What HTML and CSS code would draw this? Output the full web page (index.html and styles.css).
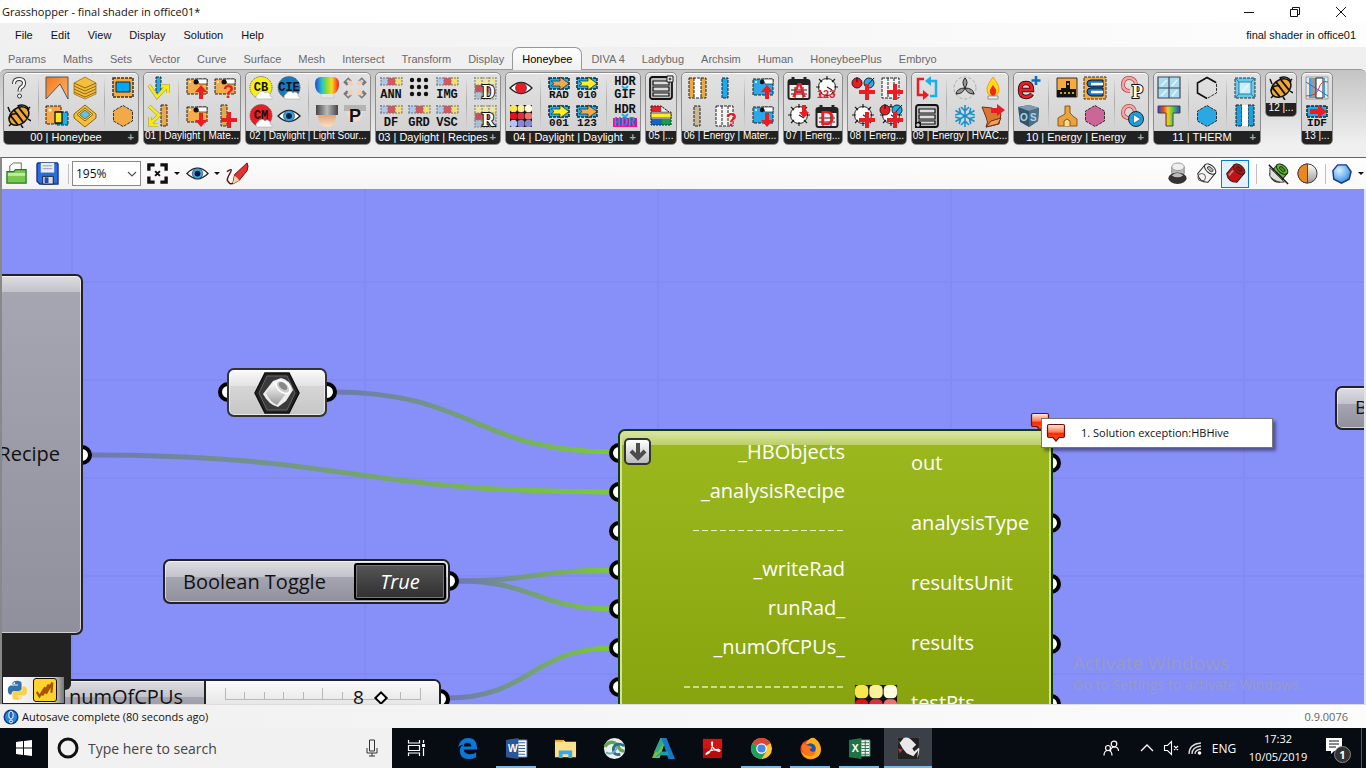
FILE: index.html
```html
<!DOCTYPE html>
<html lang="en">
<head>
<meta charset="utf-8">
<title>Grasshopper - final shader in office01*</title>
<link rel="stylesheet" href="styles.css">
</head>
<body>
<svg class="defs" aria-hidden="true">
  <defs>
    <linearGradient id="steel" x1="0" y1="0" x2="0" y2="1"><stop offset="0" stop-color="#fff"/><stop offset="1" stop-color="#999"/></linearGradient>
    <linearGradient id="dark" x1="0" y1="0" x2="1" y2="0"><stop offset="0" stop-color="#444"/><stop offset=".5" stop-color="#bbb"/><stop offset="1" stop-color="#444"/></linearGradient>
    <linearGradient id="orange" x1="0" y1="0" x2="1" y2="1"><stop offset="0" stop-color="#f2761c"/><stop offset="1" stop-color="#fbb96d"/></linearGradient>
    <linearGradient id="rainbow"><stop offset="0" stop-color="#2446d8"/><stop offset=".3" stop-color="#28c8c0"/><stop offset=".5" stop-color="#8fdc30"/><stop offset=".7" stop-color="#ffd820"/><stop offset="1" stop-color="#e82020"/></linearGradient>
    <linearGradient id="rainbow2"><stop offset="0" stop-color="#2446d8"/><stop offset=".25" stop-color="#e85020"/><stop offset=".45" stop-color="#ffc820"/><stop offset=".65" stop-color="#58d040"/><stop offset="1" stop-color="#2446d8"/></linearGradient>
    <linearGradient id="redball" x1="0" y1="0" x2="0" y2="1"><stop offset="0" stop-color="#fff0e4"/><stop offset=".45" stop-color="#ff7a50"/><stop offset=".55" stop-color="#f42c08"/><stop offset="1" stop-color="#ff5a20"/></linearGradient>
    <linearGradient id="wire" gradientUnits="objectBoundingBox"><stop offset="0" stop-color="#6e78b4"/><stop offset="1" stop-color="#7bcb35"/></linearGradient>
    <linearGradient id="bulb" x1="0" y1="0" x2="0" y2="1"><stop offset="0" stop-color="#e0a070"/><stop offset="1" stop-color="#fbe0c4"/></linearGradient>
    <radialGradient id="blueball" cx=".35" cy=".3" r=".8"><stop offset="0" stop-color="#d8f0ff"/><stop offset=".6" stop-color="#6ab0f0"/><stop offset="1" stop-color="#2f6cc8"/></radialGradient>
    <symbol id="strip" viewBox="0 0 24 24"><path fill="#a9c9ea" d="M2 2h7v7H2z"/><path fill="#e5505c" d="M9 2h7v7H9z"/><path fill="#f0de72" d="M16 2h7v7h-7z"/><path d="M1 2h22M1 9h22M2 1v9M9 1v9M16 1v9M23 1v9" fill="none" stroke="#777" stroke-width="1" stroke-dasharray="2 1"/></symbol>
    <symbol id="folder" viewBox="0 0 24 24"><path d="M2 3h20v15H2z" fill="#f4ad4a" stroke="#222" stroke-dasharray="3 1"/><path d="M12 3h10v5h-8z" fill="#fff" stroke="#222" stroke-width=".7"/><circle cx="11" cy="6" r="2.500" fill="#111"/><circle cx="5" cy="6" r="1" fill="#fff"/></symbol>
    <symbol id="bfolder" viewBox="0 0 24 24"><path d="M2 3h20v16H2z" fill="#29a9ea" stroke="#222" stroke-dasharray="3 1"/><path d="M12 3h10v5h-8z" fill="#fff" stroke="#222" stroke-width=".7"/><circle cx="11" cy="6" r="2.200" fill="#111"/><circle cx="5" cy="6" r="1" fill="#fff"/></symbol>
    <symbol id="up" viewBox="0 0 24 24"><path d="m16 9 6 7h-4v7h-4v-7h-4z" fill="#ec1c24"/></symbol>
    <symbol id="down" viewBox="0 0 24 24"><path d="m16 23 6-7h-4V9h-4v7h-4z" fill="#ec1c24"/></symbol>
    <symbol id="plus" viewBox="0 0 24 24"><path d="M14 8h4v6h6v4h-6v6h-4v-6H8v-4h6z" fill="#ec1c24"/></symbol>
    <symbol id="clock" viewBox="0 0 24 24"><circle cx="12" cy="11" r="8.500" fill="#fff" stroke="#222"/><path d="M12 0v4M12 18v4M1 11h4M19 11h4M4 3l3 3M20 3l-3 3M4 19l3-3M20 19l-3-3M12 11l5 3" stroke="#222" stroke-width="1.200"/></symbol>
    <symbol id="cal" viewBox="0 0 24 24"><rect x="1.500" y="4" width="21" height="19" rx="2" fill="#eee" stroke="#222" stroke-width="2"/><path d="M1 4h22v5H1z" fill="#222"/><path d="M6 1v6M18 1v6" stroke="#222" stroke-width="3"/><path d="M4 14h16M4 18h16M8 11v11M16 11v11" stroke="#222"/></symbol>
    <symbol id="arrowbox" viewBox="0 0 24 24"><path d="M2 2h20v11H2z" fill="#20aeea" stroke="#222" stroke-width="1.500" stroke-dasharray="3 1"/><path d="M4 5h9V1l9 6.500-9 6.500v-4H4l3-2.500z" fill="currentColor" stroke="#222" stroke-width=".7"/></symbol>
    <symbol id="hex" viewBox="0 0 24 24"><path d="m12 1.500 9.500 5.500v10L12 22.500 2.500 17V7z" fill="currentColor" stroke="#333" stroke-dasharray="3 1"/></symbol>
    <symbol id="bee" viewBox="0 0 24 24"><path d="M3 8 1 3M12 4l-1-3M20 6l3-3M21 15l3 2M14 21l2 3M5 19l-3 3" stroke="#111" stroke-width="1.500"/><ellipse cx="12" cy="12" rx="11" ry="8" transform="rotate(-40 12 12)" fill="#f0a830" stroke="#111" stroke-width="1.500"/><path d="m7 6 9 12M12 4l8 10M3 11l8 10" stroke="#111" stroke-width="2"/><path d="M2 15c1-5 5-6 9-5M11 2c4-2 9-1 11 4" fill="none" stroke="#111" stroke-width="1.500"/></symbol>
    <symbol id="eye" viewBox="0 0 24 24"><path d="M1 12Q12 1 23 12 12 23 1 12z" fill="#fff" stroke="#222" stroke-width="1.300"/><circle cx="12" cy="12" r="5.500" fill="currentColor" stroke="#234" stroke-width=".6"/></symbol>
    <symbol id="cloud" viewBox="0 0 24 24"><path d="M8 23a3 3 0 0 1 1-5 4 4 0 0 1 7-1 3 3 0 0 1 5 3q3 0 2 3z" fill="#fff" stroke="#999" stroke-width=".5"/></symbol>
    <symbol id="tiles" viewBox="0 0 24 24"><path fill="#ece6a0" d="M2 2h21v7H2z"/><path fill="#c8505c" d="M2 9h14v7H2z"/><path fill="#a9c0dc" d="M2 16h14v7H2z"/><path d="M1 2h22M1 9h22M1 16h22M1 23h22M2 1v22M9 1v22M16 1v22M23 1v22" stroke="#888" stroke-width="1.200" stroke-dasharray="2 1"/></symbol>
    <symbol id="mosaic" viewBox="0 0 24 24"><path fill="#111" d="M1 1h22v22H1z"/><g stroke="none"><g fill="#f9e64e"><rect x="1" y="1" width="7" height="7" rx="2.500"/><rect x="8.500" y="1" width="7" height="7" rx="2.500" fill="#fbf09a"/><rect x="16" y="1" width="7" height="7" rx="2.500" fill="#fffce0"/></g><g fill="#e0101c"><rect x="1" y="8.500" width="7" height="7" rx="2.500"/><rect x="8.500" y="8.500" width="7" height="7" rx="2.500" fill="#d83040"/><rect x="16" y="8.500" width="7" height="7" rx="2.500" fill="#f07070"/></g><g fill="#8888d0"><rect x="1" y="16" width="7" height="7" rx="2.500" fill="#b8c4f0"/><rect x="8.500" y="16" width="7" height="7" rx="2.500"/><rect x="16" y="16" width="7" height="7" rx="2.500"/></g></g></symbol>
    <symbol id="panel" viewBox="0 0 24 24"><rect x="1" y="1" width="22" height="22" rx="2.500" fill="#bbb" stroke="#111" stroke-width="1.800"/><path d="M4 5h16v4H4zM4 11h16v4H4zM4 17h16v3H4z" fill="#ddd" stroke="#111" stroke-width="1.200"/></symbol>
    <symbol id="can" viewBox="0 0 24 24"><g transform="rotate(40 12 12)"><path d="M5 6v12q7 6 14 0V6z" fill="currentColor" stroke="#222"/><ellipse cx="12" cy="6" rx="7" ry="4" fill="currentColor" stroke="#222"/><ellipse cx="12" cy="6" rx="3.500" ry="1.800" fill="#000" fill-opacity=".25" stroke="#222" stroke-width=".8"/><path d="M8 11v7" stroke="#fff" stroke-opacity=".4" stroke-width="2"/></g></symbol>
    <symbol id="balloon" viewBox="0 0 20 20"><path d="M3 1.500h14q1.500 0 1.500 1.500v10q0 1.500-1.500 1.500h-4L10 18l-3-3.500H3q-1.500 0-1.500-1.500V3q0-1.500 1.500-1.500z" fill="url(#redball)" stroke="#6a1010" stroke-width="1.200"/></symbol>
  </defs>
</svg>

<header class="titlebar">
  <h1>Grasshopper - final shader in office01*</h1>
  <div class="winbtns">
    <button aria-label="Minimize"><svg viewBox="0 0 12 12"><path d="M1 6.500h10"/></svg></button>
    <button aria-label="Restore"><svg viewBox="0 0 12 12"><path d="M1.500 3.500h7v7h-7zM3.500 3.500v-2h7v7h-2"/></svg></button>
    <button aria-label="Close"><svg viewBox="0 0 12 12"><path d="m1 1 10 10M11 1 1 11"/></svg></button>
  </div>
</header>

<nav class="menubar">
  <button>File</button><button>Edit</button><button>View</button><button>Display</button><button>Solution</button><button>Help</button>
  <span class="docname">final shader in office01</span>
</nav>

<nav class="tabs">
  <button>Params</button><button>Maths</button><button>Sets</button><button>Vector</button><button>Curve</button><button>Surface</button><button>Mesh</button><button>Intersect</button><button>Transform</button><button>Display</button><button class="active">Honeybee</button><button>DIVA 4</button><button>Ladybug</button><button>Archsim</button><button>Human</button><button>HoneybeePlus</button><button>Embryo</button>
</nav>

<section class="ribbon">
  <div class="group">
    <div class="cells">
      <div class="sub">
        <button aria-label="Help"><svg viewBox="0 0 24 24"><path d="M7 8q0-5 5-5t5 4q0 3-3 4.500-1.500 1-1.500 4" fill="none" stroke="#333" stroke-width="4"/><path d="M7 8q0-5 5-5t5 4q0 3-3 4.500-1.500 1-1.500 4" fill="none" stroke="#fff" stroke-width="2"/><circle cx="12.500" cy="20" r="2" fill="#fff" stroke="#333"/></svg></button>
        <button aria-label="Bee"><svg viewBox="0 0 24 24"><use href="#bee"/></svg></button>
      </div>
      <div class="sub">
        <button aria-label="Zone"><svg viewBox="0 0 24 24"><path d="M1 1h22v22L15 8 1 23z" fill="url(#orange)" stroke="#555"/></svg></button>
        <button aria-label="Glazing"><svg viewBox="0 0 24 24"><path d="M1 2h15v18H1z" fill="#f8a848" stroke="#222" stroke-dasharray="3 1"/><circle cx="5" cy="6" r="1.500" fill="#fff"/><path d="M12 8h11v13H12z" fill="#20aeea" stroke="#222" stroke-dasharray="3 1"/><path d="M10 8h7v11h-7z" fill="#ffe820" stroke="#111" stroke-width="1.300"/></svg></button>
        <button aria-label="Floors"><svg viewBox="0 0 24 24"><path d="M1 7l11-6 11 6v11l-11 5L1 18z" fill="#f5be3c" stroke="#8a6410" stroke-width=".7"/><path d="m1 7 11 5 11-5M1 10l11 5 11-5M1 13l11 5 11-5M1 16l11 5 11-5" fill="none" stroke="#8a6410"/></svg></button>
        <button aria-label="Skylight"><svg viewBox="0 0 24 24"><path d="m12 1 11 9v4l-11 9L1 14v-4z" fill="#f5be3c" stroke="#8a6410"/><path d="m12 4 8 6.500-8 6.500-8-6.500z" fill="#fbd66c" stroke="#8a6410"/><path d="m12 6 5.500 4.500L12 15l-5.500-4.500z" fill="#5cc4e4" stroke="#8a6410"/></svg></button>
      </div>
      <div class="sub">
        <button aria-label="Surface"><svg viewBox="0 0 24 24"><path d="M2 2h20v19H2z" fill="#f5ab40" stroke="#333" stroke-width="1.500" stroke-dasharray="3 1"/><path d="M5 6h14v10H5z" fill="#00a8f0" stroke="#222"/></svg></button>
        <button aria-label="Cell"><svg viewBox="0 0 24 24" class="c-amber"><use href="#hex"/></svg></button>
      </div>
    </div>
    <div class="label more">00 | Honeybee</div>
  </div>

  <div class="group">
    <div class="cells">
      <div class="sub">
        <button aria-label="Transmit"><svg viewBox="0 0 24 24"><path d="M9 1h5v16H9z" fill="#20aeea" stroke="#222" stroke-dasharray="3 1"/><path d="m2 9 8 12 10-11M14 10h7v7" fill="none" stroke="#888" stroke-width="3.600"/><path d="m2 9 8 12 10-11M14 10h7v7" fill="none" stroke="#f6ea10" stroke-width="2.800"/></svg></button>
        <button aria-label="Reflect"><svg viewBox="0 0 24 24"><path d="M14 1h6v21h-6z" fill="#e8a850" stroke="#222" stroke-dasharray="3 1"/><path d="m2 2 10 9-9 9M3 13v8h8" fill="none" stroke="#888" stroke-width="3.600"/><path d="m2 2 10 9-9 9M3 13v8h8" fill="none" stroke="#f6ea10" stroke-width="2.800"/></svg></button>
      </div>
      <div class="sub">
        <button aria-label="Write material"><svg viewBox="0 0 24 24"><use href="#folder"/><use href="#up"/></svg></button>
        <button aria-label="Read material"><svg viewBox="0 0 24 24"><use href="#folder"/><use href="#down"/></svg></button>
        <button aria-label="Search material"><svg viewBox="0 0 24 24"><use href="#folder"/><text x="10" y="22" class="t-red t18">?</text></svg></button>
        <button aria-label="Add material"><svg viewBox="0 0 24 24"><path d="M8 1h6v21H8z" fill="#e8a850" stroke="#333" stroke-dasharray="3 1"/><use href="#plus"/></svg></button>
      </div>
    </div>
    <div class="label cut">01 | Daylight | Mate...</div>
  </div>

  <div class="group">
    <div class="cells">
      <div class="sub">
        <button aria-label="CB sky"><svg viewBox="0 0 24 24"><circle cx="12" cy="11.500" r="11" fill="#f8f010" stroke="#555" stroke-dasharray="1 1"/><text x="12" y="15" class="t-mono">CB</text><use href="#cloud"/></svg></button>
        <button aria-label="CM sky"><svg viewBox="0 0 24 24"><circle cx="12" cy="11.500" r="11" fill="#ec1c24" stroke="#555" stroke-dasharray="1 1"/><text x="12" y="15" class="t-mono">CM</text><use href="#cloud"/></svg></button>
        <button aria-label="CIE sky"><svg viewBox="0 0 24 24"><circle cx="12" cy="11.500" r="11" fill="#1878c0" stroke="#555" stroke-dasharray="1 1"/><text x="12" y="15" class="t-mono">CIE</text><use href="#cloud"/></svg></button>
        <button aria-label="View sky"><svg viewBox="0 0 24 24" class="c-sky"><use href="#eye"/><circle cx="12" cy="12" r="3" fill="#024"/></svg></button>
      </div>
      <div class="sub">
        <button aria-label="Light colour"><svg viewBox="0 0 24 24"><path d="M6 15h13v7H6z" fill="#e4e4e4" stroke="#ccc"/><path d="M0 8q0-7 6-7h12q6 0 6 7 0 8-6 10H6Q0 16 0 8z" fill="url(#rainbow)"/></svg></button>
        <button aria-label="Lamp"><svg viewBox="0 0 24 24"><path d="M3 10h18q0 13-9 13T3 10z" fill="url(#bulb)"/><path d="M1 1h22v10H1z" fill="url(#dark)"/></svg></button>
        <button aria-label="Luminaires"><svg viewBox="0 0 24 24"><g stroke-width="5"><path d="m2 8 5-5M17 3l5 5M2 16l5 5M17 21l5-5" stroke="#777"/><path d="m6 9 3-3M15 6l3 3M6 15l3 3M15 18l3-3" stroke="#f6d0b0"/><path d="m4 6 2-2M18 4l2 2M4 18l2 2M18 20l2-2" stroke="#ddd" stroke-width="2"/></g></svg></button>
        <button aria-label="Lamp parameters"><svg viewBox="0 0 24 24"><path d="M1 1h22v6H1z" fill="#b4b4b4"/><path d="M4 7h16q-1 10-8 11T4 7z" fill="#eedccb"/><text x="6" y="18" class="t-black t18">P</text></svg></button>
      </div>
    </div>
    <div class="label cut">02 | Daylight | Light Sour...</div>
  </div>

  <div class="group">
    <div class="cells">
      <div class="sub">
        <button aria-label="Annual"><svg viewBox="0 0 24 24"><use href="#strip"/><text x="12" y="22" class="t-mono">ANN</text></svg></button>
        <button aria-label="Daylight factor"><svg viewBox="0 0 24 24"><use href="#strip"/><text x="12" y="22" class="t-mono">DF</text></svg></button>
        <button aria-label="Test points"><svg viewBox="0 0 24 24"><g fill="#111"><circle cx="5" cy="4" r="2.200"/><circle cx="12" cy="4" r="2.200"/><circle cx="19" cy="4" r="2.200"/><circle cx="5" cy="11" r="2.200"/><circle cx="12" cy="11" r="2.200"/><circle cx="19" cy="11" r="2.200"/><circle cx="5" cy="18" r="2.200"/><circle cx="12" cy="18" r="2.200"/><circle cx="19" cy="18" r="2.200"/></g></svg></button>
        <button aria-label="Grid based"><svg viewBox="0 0 24 24"><use href="#strip"/><text x="12" y="22" class="t-mono">GRD</text></svg></button>
        <button aria-label="Image based"><svg viewBox="0 0 24 24"><use href="#strip"/><text x="12" y="22" class="t-mono">IMG</text></svg></button>
        <button aria-label="Vertical sky"><svg viewBox="0 0 24 24"><use href="#strip"/><text x="12" y="22" class="t-mono">VSC</text></svg></button>
      </div>
      <div class="sub">
        <button aria-label="Daylight grid"><svg viewBox="0 0 24 24"><use href="#tiles"/><text x="9" y="22" class="t-out">D</text></svg></button>
        <button aria-label="Radiation grid"><svg viewBox="0 0 24 24"><use href="#tiles"/><text x="9" y="22" class="t-out">R</text></svg></button>
      </div>
    </div>
    <div class="label more">03 | Daylight | Recipes</div>
  </div>

  <div class="group">
    <div class="cells">
      <div class="sub">
        <button aria-label="Glare"><svg viewBox="0 0 24 24" class="c-red"><use href="#eye"/></svg></button>
        <button aria-label="Run daylight"><svg viewBox="0 0 24 24"><use href="#mosaic"/></svg></button>
      </div>
      <div class="sub">
        <button aria-label="RAD"><svg viewBox="0 0 24 24" class="c-amber"><use href="#arrowbox"/><text x="12" y="22" class="t-mono t10">RAD</text></svg></button>
        <button aria-label="001"><svg viewBox="0 0 24 24" class="c-yellow"><use href="#arrowbox"/><text x="12" y="22" class="t-mono t10">001</text></svg></button>
        <button aria-label="010"><svg viewBox="0 0 24 24" class="c-yellow"><use href="#arrowbox"/><text x="12" y="22" class="t-mono t10">010</text></svg></button>
        <button aria-label="123"><svg viewBox="0 0 24 24" class="c-amber"><use href="#arrowbox"/><text x="12" y="22" class="t-mono t10">123</text></svg></button>
      </div>
      <div class="sub">
        <button aria-label="HDR to GIF"><svg viewBox="0 0 24 24"><text x="12" y="9" class="t-mono">HDR</text><path d="m9 10 3 3 3-3" fill="none" stroke="#20aeea" stroke-width="2"/><text x="12" y="22" class="t-mono">GIF</text></svg></button>
        <button aria-label="HDR false colour"><svg viewBox="0 0 24 24"><text x="12" y="9" class="t-mono">HDR</text><path d="m9 10 3 3 3-3" fill="none" stroke="#20aeea" stroke-width="2"/><path d="M0 14h24v9H0z" fill="#f01090"/><text x="12" y="22" class="t-mono t-blue">HDR</text></svg></button>
      </div>
    </div>
    <div class="label more">04 | Daylight | Daylight</div>
  </div>

  <div class="group">
    <div class="cells"><div class="sub">
      <button aria-label="List"><svg viewBox="0 0 24 24"><use href="#panel"/><path d="M18 0h6v6h-6z" fill="#fff" stroke="#111"/><path d="M19.500 3h3M21 1.500v3" stroke="#111"/></svg></button>
      <button aria-label="Schemes"><svg viewBox="0 0 24 24"><path d="M2 2h10v6H2z" fill="#ec1c24"/><path d="m12 2 8 6h-8z" fill="#d8f0f8" stroke="#555" stroke-width=".5"/><path d="M2 15h11v6H2z" fill="#1464c8"/><path d="M13 15h9v6h-9z" fill="#10a050"/><path d="M2 2h10l8 6h2v13H2z" fill="none" stroke="#222" stroke-dasharray="2 1"/><path d="M2 9h20v5H2z" fill="#ffee20" stroke="#222" stroke-width=".7"/></svg></button>
    </div></div>
    <div class="label cut">05 |...</div>
  </div>

  <div class="group">
    <div class="cells">
      <div class="sub">
        <button aria-label="Construction"><svg viewBox="0 0 24 24"><path d="M4 2h5v20H4zM16 2h5v20h-5z" fill="#f0a840"/><path d="M9 2h7v20H9z" fill="#fff"/><path d="M4 2h17v20H4zM9 2v20M16 2v20" fill="none" stroke="#222" stroke-dasharray="3 1"/></svg></button>
        <button aria-label="Opaque"><svg viewBox="0 0 24 24"><path d="M9 2h6v20H9z" fill="#c9b896" stroke="#222" stroke-dasharray="3 1"/></svg></button>
        <button aria-label="Glass"><svg viewBox="0 0 24 24"><path d="M9 2h6v20H9z" fill="#20a8ea" stroke="#222" stroke-dasharray="3 1"/></svg></button>
        <button aria-label="Find construction"><svg viewBox="0 0 24 24"><path d="M3 2h17v20H3zM9 2v20M15 2v20" fill="#f4f4f4" stroke="#222" stroke-dasharray="3 1"/><text x="13" y="22" class="t-red t18">?</text></svg></button>
      </div>
      <div class="sub">
        <button aria-label="Write library"><svg viewBox="0 0 24 24"><use href="#bfolder"/><use href="#up"/></svg></button>
        <button aria-label="Read library"><svg viewBox="0 0 24 24"><use href="#bfolder"/><use href="#down"/></svg></button>
      </div>
    </div>
    <div class="label cut">06 | Energy | Mater...</div>
  </div>

  <div class="group">
    <div class="cells"><div class="sub">
      <button aria-label="Annual schedule"><svg viewBox="0 0 24 24"><use href="#cal"/><text x="5" y="21" class="t-red t20">A</text></svg></button>
      <button aria-label="Read schedule"><svg viewBox="0 0 24 24"><use href="#clock"/><path d="m17 14 5-6h-3V1h-4v7h-3z" fill="#ec1c24"/></svg></button>
      <button aria-label="Hour values"><svg viewBox="0 0 24 24"><use href="#clock"/><text x="2" y="22" class="t-red t11">123</text></svg></button>
      <button aria-label="Day schedule"><svg viewBox="0 0 24 24"><use href="#cal"/><text x="5" y="21" class="t-red t20">D</text></svg></button>
    </div></div>
    <div class="label cut">07 | Energ...</div>
  </div>

  <div class="group">
    <div class="cells"><div class="sub">
      <button aria-label="Add loads"><svg viewBox="0 0 24 24"><circle cx="6" cy="7" r="5" fill="#ec1c24" stroke="#222"/><circle cx="18" cy="7" r="5" fill="#20aeea" stroke="#222"/><path d="M6 1v5M15 11l8-9" stroke="#111"/><use href="#plus"/></svg></button>
      <button aria-label="Add schedule"><svg viewBox="0 0 24 24"><use href="#clock"/><use href="#plus"/></svg></button>
      <button aria-label="Add walls"><svg viewBox="0 0 24 24"><path d="M3 2h17v20H3zM9 2v20M15 2v20" fill="#f4f4f4" stroke="#222" stroke-dasharray="3 1"/><use href="#plus"/></svg></button>
      <button aria-label="Add thresholds"><svg viewBox="0 0 24 24"><use href="#clock"/><circle cx="6" cy="6" r="5" fill="#ec1c24" stroke="#222"/><circle cx="18" cy="6" r="5" fill="#20aeea" stroke="#222"/><path d="M6 0v5M15 10l8-9" stroke="#111"/><use href="#plus"/></svg></button>
    </div></div>
    <div class="label cut">08 | Energ...</div>
  </div>

  <div class="group">
    <div class="cells">
      <div class="sub">
        <button aria-label="Air loop"><svg viewBox="0 0 24 24"><path d="M9 3H3v16h7" fill="none" stroke="#ec1c24" stroke-width="2.500"/><path d="m8 14 6 5-6 5z" fill="#ec1c24"/><path d="M15 20h6V5h-6" fill="none" stroke="#20aeea" stroke-width="2.500"/><path d="m16 0-6 5 6 5z" fill="#20aeea"/></svg></button>
        <button aria-label="HVAC list"><svg viewBox="0 0 24 24"><use href="#panel"/><path d="M0 18h6v6H0z" fill="#111"/><path d="M1 21h4M3 19v4" stroke="#fff"/></svg></button>
      </div>
      <div class="sub">
        <button aria-label="Fan"><svg viewBox="0 0 24 24"><circle cx="12" cy="12" r="11" fill="none" stroke="#aaa" stroke-dasharray="3 2"/><path d="M12 12q-4-6 0-10 4 4 0 10zM12 12q-2 6-9 6 1-6 9-6zM12 12q2 6 9 6-1-6-9-6z" fill="#999" stroke="#222"/></svg></button>
        <button aria-label="Cooling"><svg viewBox="0 0 24 24"><g fill="none" stroke="#1890d0" stroke-width="1.600"><path id="arm" d="M12 1v22M8 3l4 4 4-4M8 21l4-4 4 4"/><use href="#arm" transform="rotate(60 12 12)"/><use href="#arm" transform="rotate(120 12 12)"/></g></svg></button>
        <button aria-label="Heating"><svg viewBox="0 0 24 24"><path d="M12 1q6 8 6 12 0 7-6 7t-6-7q0-4 6-12z" fill="#ffd91c" stroke="#f0a010"/><path d="M12 9q4 5 3 8-1 3-3 3t-3-3q-1-3 3-8z" fill="#ec2c14"/><path d="M7 20h10v3H7z" fill="#eee" stroke="#777" stroke-width=".7"/></svg></button>
        <button aria-label="Export HVAC"><svg viewBox="0 0 24 24"><path d="m1 3 10 1 9 6-2 10-13 3q3-5 0-10z" fill="#d87830" stroke="#703010"/><path d="m5 23 5-6 10-3-3 6z" fill="#f0a060" stroke="#703010"/><path d="M10 4h6V0l8 6-8 6V9h-6z" fill="#ec1c24"/></svg></button>
      </div>
    </div>
    <div class="label cut">09 | Energy | HVAC...</div>
  </div>

  <div class="group">
    <div class="cells">
      <div class="sub">
        <button aria-label="EnergyPlus"><svg viewBox="0 0 24 24"><path d="M3 14h12q0-7-6-7T3 14q0 7 6 7 4 0 6-3" fill="none" stroke="#111" stroke-width="4.400"/><path d="M3 14h12q0-7-6-7T3 14q0 7 6 7 4 0 6-3" fill="none" stroke="#ec1c24" stroke-width="2.800"/><path d="M19 0v9M14.500 4.500h9" stroke="#1070c0" stroke-width="2.600"/></svg></button>
        <button aria-label="OpenStudio"><svg viewBox="0 0 24 24"><path d="m1 3 11-2 10 3-1 13-9 6-9-5z" fill="#34546c"/><path d="m1 3 11 4 10-3-10-3z" fill="#7c9cb0"/><path d="M12 7v16l9-6 1-13z" fill="#4c7088"/><text x="3" y="17" class="t-os">O</text><text x="13" y="17" class="t-os">S</text></svg></button>
      </div>
      <div class="sub">
        <button aria-label="Plant"><svg viewBox="0 0 24 24"><path d="M2 2h20v19H2z" fill="#f5ab40" stroke="#333"/><path d="M2 14h4v-2h5V5h4v8h6v8H2z" fill="#111"/><path d="M5 17h2M9 17h2M13 17h2M17 17h2M12 8h2" stroke="#fd0" stroke-width="1.500"/></svg></button>
        <button aria-label="Generator"><svg viewBox="0 0 24 24"><path d="M10 2h5v7l4 4 3 2v7H3v-8l7-4z" fill="#e8a440" stroke="#8a5a10"/><path d="M9 22v-5l3-2 3 2v5" fill="#fcd890" stroke="#8a5a10"/></svg></button>
        <button aria-label="Read results"><svg viewBox="0 0 24 24"><path d="M1 1h22v22H1z" fill="#f5ab40" stroke="#333" stroke-dasharray="3 1"/><path d="M20 4H8q-4 0-4 3.500T8 11h12V4zM20 12H8q-4 0-4 3.500T8 20h12z" fill="#1878c8" stroke="#111"/><path d="M8 8h12M8 16h12" stroke="#fff" stroke-width="2.500"/></svg></button>
        <button aria-label="Balance"><svg viewBox="0 0 24 24" class="c-pink"><use href="#hex"/></svg></button>
      </div>
      <div class="sub">
        <button aria-label="Simulation parameters"><svg viewBox="0 0 24 24"><path d="M15 8q-1-6-7-6t-6 7q0 6 7 6" fill="none" stroke="#b44" stroke-width="4"/><path d="M15 8q-1-6-7-6t-6 7q0 6 7 6" fill="none" stroke="#eaa" stroke-width="2.500"/><text x="11" y="22" class="t-out">P</text></svg></button>
        <button aria-label="Run simulation"><svg viewBox="0 0 24 24"><path d="M14 8q-1-6-6-6T2 8q0 6 6 6" fill="none" stroke="#b44" stroke-width="4"/><path d="M14 8q-1-6-6-6T2 8q0 6 6 6" fill="none" stroke="#eaa" stroke-width="2.500"/><circle cx="15" cy="15" r="7.500" fill="#18a0e0" stroke="#222"/><path d="m12.500 10.500 7 4.500-7 4.500z" fill="#fff" stroke="#222" stroke-width=".5"/></svg></button>
      </div>
    </div>
    <div class="label more">10 | Energy | Energy</div>
  </div>

  <div class="group">
    <div class="cells">
      <div class="sub">
        <button aria-label="Window"><svg viewBox="0 0 24 24"><path d="M1 1h22v21H1zM12 1v21M1 12h22" fill="#a8dcf0" stroke="#445" stroke-width="1.200"/><path d="m4 10 6-6M15 10l5-6M4 20l6-6M15 20l5-6" stroke="#e4f6fc" stroke-width="1.500"/></svg></button>
        <button aria-label="THERM"><svg viewBox="0 0 24 24"><path d="M1 2h22v7h-7v13H9V9H1z" fill="url(#rainbow2)" stroke="#444"/></svg></button>
      </div>
      <div class="sub">
        <button aria-label="Boundary"><svg viewBox="0 0 24 24"><path d="m12 1.500 9.500 5.500v10L12 22.500 2.500 17V7z" fill="none" stroke="#333" stroke-dasharray="3 1"/><path d="M12 22.500 2.500 17V7L12 1.500l9 5" fill="none" stroke="#111" stroke-width="1.600"/></svg></button>
        <button aria-label="Polygon"><svg viewBox="0 0 24 24" class="c-blue"><use href="#hex"/></svg></button>
      </div>
      <div class="sub">
        <button aria-label="Frame"><svg viewBox="0 0 24 24"><path d="M2 2h20v20H2z" fill="#68c8ec" stroke="#333" stroke-dasharray="3 1"/><path d="M6 6h12v12H6z" fill="#cceefa" stroke="#2880a8"/><path d="m2 2 4 4M22 2l-4 4M2 22l4-4M22 22l-4-4" stroke="#2880a8"/><path d="m9 16 7-8" stroke="#fff"/></svg></button>
        <button aria-label="Cavity"><svg viewBox="0 0 24 24"><path d="M3 1h6v21H3zM15 1h6v21h-6z" fill="#18a0e0" stroke="#222" stroke-dasharray="3 1"/><path d="M9 1h6v21H9z" fill="#fff"/></svg></button>
      </div>
    </div>
    <div class="label more">11 | THERM</div>
  </div>

  <div class="group short">
    <div class="cells"><div class="sub one">
      <button aria-label="Developers"><svg viewBox="0 0 24 24"><use href="#bee"/></svg></button>
    </div></div>
    <div class="label cut">12 |...</div>
  </div>

  <div class="group">
    <div class="cells"><div class="sub">
      <button aria-label="Chart"><svg viewBox="0 0 24 24"><path d="M1 1h22v22H1z" fill="#e8e8e8" stroke="#999"/><path d="M6 2h5v20H6z" fill="#999"/><path d="M11 2h7v20h-7z" fill="#fff" stroke="#222"/><path d="M5 2v20M19 2v20" stroke="#30a8e0" stroke-width="2"/><path d="M1 20Q12 20 14 12T23 6" fill="none" stroke="#e03030"/><path d="m1 6 22 14" stroke="#55c"/></svg></button>
      <button aria-label="IDF export"><svg viewBox="0 0 24 24"><path d="M2 2h20v11H2z" fill="#20aeea" stroke="#222" stroke-width="1.500" stroke-dasharray="3 1"/><path d="M5 5h8V1l9 6.500-9 6.500v-4H5z" fill="#ec1c24"/><text x="12" y="22" class="t-mono t10">IDF</text></svg></button>
    </div></div>
    <div class="label cut">13 |...</div>
  </div>
</section>

<section class="toolbar">
  <button class="ib" aria-label="Open"><svg viewBox="0 0 24 24"><path d="M5 10V4l4-3h8v12" fill="#fff" stroke="#666"/><path d="M2 10h7l2-2h11v14H2z" fill="#7cc850" stroke="#1c7a1c" stroke-width="1.300"/><path d="M3 13h18" stroke="#c0eca0" stroke-width="3"/></svg></button>
  <button class="ib" aria-label="Save"><svg viewBox="0 0 24 24"><path d="M2 1h20l1 1v21H4l-3-3V2z" fill="#2c6ce0" stroke="#0c2c80" stroke-width="1.300"/><path d="M5 1h14v10H5z" fill="#e8eef8"/><path d="M7 4h10M7 7h10" stroke="#999"/><path d="M7 15h11v8H7z" fill="#ddd" stroke="#123"/><path d="M9 16h4v6H9z" fill="#1c4cb0"/></svg></button>
  <span class="sep"></span>
  <label class="zoom"><select aria-label="Zoom"><option>195%</option><option>100%</option></select><svg viewBox="0 0 10 10"><path d="m1 3 4 4 4-4" fill="none" stroke="#555" stroke-width="1.200"/></svg></label>
  <button class="ib" aria-label="Zoom extents"><svg viewBox="0 0 24 24"><path d="M3 9V3h6M15 3h6v6M21 15v6h-6M9 21H3v-6" fill="none" stroke="#111" stroke-width="3.500"/><path d="m9.500 9.500 5 5M14.500 9.500l-5 5" stroke="#111" stroke-width="2"/></svg></button><button class="caret" aria-label="Zoom options"></button>
  <button class="ib" aria-label="Views"><svg viewBox="0 0 24 24" class="c-sky"><use href="#eye"/><circle cx="12" cy="12" r="3" fill="#013"/></svg></button><button class="caret" aria-label="View options"></button>
  <button class="ib" aria-label="Sketch"><svg viewBox="0 0 24 24"><path d="m9 13 13-12q2 3 0 8L14 19l-7 4z" fill="#e03434" stroke="#6a0c0c"/><path d="m9 14 5 5-7 4z" fill="#f4d4a0"/><path d="M1 10q7-5 3 2T2 20q2 4 5 2" fill="none" stroke="#511" stroke-width="1.500"/></svg></button>
  <span class="grow"></span>
  <button class="ib" aria-label="No preview"><svg viewBox="0 0 24 24"><path d="M6 5v7q6 6 13 0V5z" fill="#bbb" stroke="#888"/><ellipse cx="12.500" cy="5" rx="6.500" ry="4" fill="#eee" stroke="#999"/><ellipse cx="12" cy="17" rx="9.500" ry="6" fill="#333"/><path d="M6 14q6-5 12 0-6 4-12 0z" fill="#bbb"/></svg></button>
  <button class="ib" aria-label="Wireframe"><svg viewBox="0 0 24 24" class="c-white"><use href="#can"/><circle cx="7" cy="16" r="4" fill="none" stroke="#555"/></svg></button>
  <button class="ib on" aria-label="Shaded"><svg viewBox="0 0 24 24" class="c-crimson"><use href="#can"/></svg></button>
  <span class="sep"></span>
  <button class="ib" aria-label="Selected only"><svg viewBox="0 0 24 24" class="c-green"><use href="#can"/><path d="m3 6 15 15q-8 1-15-6z" fill="#ddd" stroke="#444"/><path d="m2 3 20 20" stroke="#111" stroke-width="1.500"/></svg></button>
  <button class="ib" aria-label="Document preview"><svg viewBox="0 0 24 24"><circle cx="12" cy="12" r="10" fill="url(#steel)" stroke="#333"/><path d="M12 2a10 10 0 0 0 0 20z" fill="#e88820" stroke="#633"/></svg></button>
  <span class="sep tight"></span>
  <button class="ib" aria-label="Mesh quality"><svg viewBox="0 0 24 24"><path d="m8 3 9 0 5 7-2 8-8 4-8-4-1-9z" fill="url(#blueball)" stroke="#14388a" stroke-width="1.500"/></svg></button><button class="caret" aria-label="Quality options"></button>
</section>

<main class="canvas">
  <svg class="wires" aria-hidden="true">
    <g transform="translate(0 -189)" fill="none" stroke="url(#wire)" stroke-width="5">
      <path d="M332 392C474 392 474 452 614 452"/>
      <path d="M88 455C350 455 350 492 614 492"/>
      <path d="M457 581C535 581 535 570 614 570"/>
      <path d="M457 581C535 581 535 609 614 609"/>
      <path d="M447 698C531 698 531 648 614 648"/>
      <g fill="#fff" stroke="#000" stroke-width="4">
        <circle cx="228" cy="392" r="8"/><circle cx="327" cy="392" r="8"/>
        <circle cx="82" cy="455" r="8"/><circle cx="449" cy="581" r="8"/><circle cx="440" cy="699" r="8"/>
        <circle cx="619" cy="453" r="8"/><circle cx="619" cy="492" r="8"/><circle cx="619" cy="531" r="8"/><circle cx="619" cy="570" r="8"/><circle cx="619" cy="609" r="8"/><circle cx="619" cy="648" r="8"/><circle cx="619" cy="687" r="8"/>
        <circle cx="1051" cy="463" r="8"/><circle cx="1051" cy="523" r="8"/><circle cx="1051" cy="584" r="8"/><circle cx="1051" cy="644" r="8"/><circle cx="1051" cy="704" r="8"/>
      </g>
    </g>
  </svg>

  <div class="node slider">
    <label class="name" for="cpus">numOfCPUs</label>
    <div class="track">
      <svg class="ticks" viewBox="0 0 196 12" aria-hidden="true"><path d="M.5 0v11M19.500 4v7M39.500 4v7M58.500 4v7M78.500 4v7M97.500 0v11M117.500 4v7M175.500 4v7M195.500 0v11M0 11.500h196" stroke="#b8b8b8" fill="none"/></svg>
      <output for="cpus">8</output>
      <input id="cpus" type="range" min="0" max="10" value="8">
    </div>
  </div>

  <div class="shade"></div>
  <div class="node recipe">Recipe</div>

  <div class="node geometry">
    <svg viewBox="0 0 46 42"><path d="M11 1h24l10 20-10 20H11L1 21z" fill="#222" stroke="#111" stroke-width="1.500"/><path d="M13 4h20l8 17-8 17H13L5 21z" fill="#3a3a3a" stroke="#666"/><path d="m9 22 10-13 8-3q8 1 12 12l-7 11-8 6q-9-2-15-13z" fill="#eee"/><path d="m12 21 9-11q7 3 10 13l-8 10q-7-3-11-12z" fill="url(#steel)"/><ellipse cx="29" cy="15" rx="8" ry="5" transform="rotate(40 29 15)" fill="#ccc" stroke="#fff" stroke-width="1.500"/><ellipse cx="29" cy="14" rx="5" ry="3" transform="rotate(40 29 14)" fill="#888"/></svg>
  </div>

  <div class="node toggle"><span>Boolean Toggle</span><button>True</button></div>

  <div class="node offside"><span>Boolean Toggle</span></div>

  <section class="node daylight">
    <button class="expand" aria-label="Collapse"><svg viewBox="0 0 20 20"><path d="M10 1v15M3 9l7 7 7-7" fill="none" stroke="#4c4c4c" stroke-width="4"/></svg></button>
    <ul class="inputs">
      <li>_HBObjects</li><li>_analysisRecipe</li><li class="rule"><i></i></li><li>_writeRad</li><li>runRad_</li><li>_numOfCPUs_</li><li class="rule long"><i></i></li>
    </ul>
    <svg class="logo" viewBox="0 0 24 24"><use href="#mosaic"/></svg>
    <ul class="outputs">
      <li>out</li><li>analysisType</li><li>resultsUnit</li><li>results</li><li>testPts</li>
    </ul>
  </section>

  <svg class="alert" viewBox="0 0 20 20"><use href="#balloon"/></svg>
  <div class="tooltip" role="tooltip"><svg viewBox="0 0 20 20"><use href="#balloon"/></svg><span>1. Solution exception:HBHive</span></div>

  <div class="widget">
    <button aria-label="Python"><svg viewBox="0 0 24 24"><path d="M12 2q5 0 5 3v6q0 2-3 2H9q-3 0-3 4H4q-2-1-2-5t3-5h8V6H7V4q1-2 5-2z" fill="#3272a8"/><path d="M12 23q-5 0-5-3v-4q0-3 3-3h6q2 0 2-4v-1h2q3 1 3 5t-3 5h-8v1h5v2q-1 2-5 2z" fill="#fcd044"/><circle cx="9" cy="4.500" r="1" fill="#fff"/><circle cx="15" cy="20.500" r="1" fill="#fff"/></svg></button>
    <button class="scribble" aria-label="Markup"><svg viewBox="0 0 24 24"><path d="m3 14 3 5 6-10-3 9 7-12-3 10 7-12-1 11" fill="none" stroke="#a85400" stroke-width="2.400"/></svg></button>
  </div>

  <div class="watermark"><strong>Activate Windows</strong><span>Go to Settings to activate Windows.</span></div>
</main>

<footer class="status">
  <svg viewBox="0 0 16 16"><circle cx="8" cy="8" r="7.500" fill="#083c8c"/><circle cx="8" cy="8" r="6" fill="#2888d8"/><ellipse cx="8" cy="6" rx="2.200" ry="4" fill="#2060c0" stroke="#fff"/><circle cx="8" cy="12.500" r="1.500" fill="#2060c0" stroke="#fff"/></svg>
  <span>Autosave complete (80 seconds ago)</span>
  <span class="version">0.9.0076</span>
</footer>

<div class="taskbar">
  <button class="start" aria-label="Start"><svg viewBox="0 0 16 16"><path d="m0 2 7-1v6.500H0zM8 1l8-1v7.500H8zM0 8.500h7V15l-7-1zM8 8.500h8V16l-8-1z" fill="#fff"/></svg></button>
  <label class="search"><svg viewBox="0 0 22 22"><circle cx="11" cy="11" r="9" fill="none" stroke="#111" stroke-width="3"/></svg><input type="text" placeholder="Type here to search" aria-label="Search"><svg class="mic" viewBox="0 0 12 18"><path d="M3.500 1h5v11h-5zM1 9v5h10V9M6 14v3M3 17h6" fill="none" stroke="#333"/></svg></label>
  <button class="view" aria-label="Task view"><svg viewBox="0 0 18 16"><path d="M1.500 0v3h11V0M1.500 16v-3h11v3M1.500 5.500h11v5h-11zM16.500 0v3M16.500 8v8" fill="none" stroke="#fff" stroke-width="1.200"/><path d="M15 4h3v3h-3z" fill="#fff"/></svg></button>
  <div class="apps">
    <button aria-label="Edge"><svg viewBox="0 0 24 24"><path d="M2 11Q4 1 13 1t9 12H8q1 5 7 5 4 0 6-2v5q-3 2-8 2-9 0-9-9 0-4 4-6-4 0-6 3zm6-1h8q0-4-4-4t-4 4z" fill="#0a78d8"/></svg></button>
    <button class="run" aria-label="Word"><svg viewBox="0 0 24 24"><path d="M12 3h11v18H12z" fill="#fff" stroke="#2b579a"/><path d="M14 6h7M14 9h7M14 12h7M14 15h7M14 18h7" stroke="#2b579a"/><path d="m1 3 13-2v22L1 21z" fill="#2b579a"/><text x="3" y="16" class="t-app">W</text></svg></button>
    <button aria-label="Explorer"><svg viewBox="0 0 24 24"><path d="M1 3h9l2 2h11v16H1z" fill="#fde08a"/><path d="M1 3h9v2H1z" fill="#e8a820"/><path d="M5 22v-8h14v8h-4v-4H9v4z" fill="#38a8e8"/></svg></button>
    <button aria-label="Modeling"><svg viewBox="0 0 24 24"><circle cx="12" cy="12" r="11" fill="#e8f0f0"/><path d="M2 10Q8 2 15 8q3 8 7 6" fill="none" stroke="#62a848" stroke-width="3.500"/><path d="M22 9q-8-4-11 2-1 9 7 7" fill="none" stroke="#28708c" stroke-width="3"/><path d="M3 16q8 4 12-6" fill="none" stroke="#7ab" stroke-width="2"/></svg></button>
    <button aria-label="Autodesk"><svg viewBox="0 0 24 24"><path d="m9 1 6 0-7 21H0z" fill="#74c044"/><path d="m9 1 6 0-9 15-4 0z" fill="#2aa890"/><path d="M10 1h5l9 22h-7z" fill="#1878c8"/><path d="m2 22 8-7h6l2 4H8z" fill="#18a0a8"/></svg></button>
    <button aria-label="Acrobat"><svg viewBox="0 0 24 24"><path d="M2 2h20v20H2z" fill="#b80c0c"/><path d="M2 2h20v10H2z" fill="#d41414"/><path d="M6 18q6-3 6-12 0-2-1 0 0 7 8 9 2-1-1-2-7 0-11 3-3 2-1 2z" fill="none" stroke="#fff" stroke-width="1.300"/></svg></button>
    <button class="run" aria-label="Chrome"><svg viewBox="0 0 24 24"><circle cx="12" cy="12" r="11" fill="#fcca30"/><path d="M12 12 2.500 6.500A11 11 0 0 1 21.500 6.500z" fill="#dc4437"/><path d="M2.500 6.500A11 11 0 0 0 12 23l5-8-5-3z" fill="#1ca05c"/><circle cx="12" cy="12" r="5.500" fill="#fff"/><circle cx="12" cy="12" r="4.300" fill="#4688f0"/></svg></button>
    <button class="run" aria-label="Firefox"><svg viewBox="0 0 24 24"><circle cx="12" cy="13" r="10.500" fill="#f4402c"/><path d="M7 7q4-7 9-6 7 5 7 12 0 9-10 10-9 0-11-9 4 6 9 4 5-1 3-7z" fill="#ffb018"/><circle cx="12" cy="12" r="5.500" fill="#1c50b8"/><path d="M5 6q2 3 6 3l3 2-3 2q2 4 7 1-2 6-8 6Q3 18 3 9z" fill="#ff7418"/></svg></button>
    <button class="run" aria-label="Excel"><svg viewBox="0 0 24 24"><path d="M12 3h11v17H12z" fill="#fff" stroke="#217346"/><path d="M14 6h8M14 9h8M14 12h8M14 15h8M14 18h8M18 4v16" stroke="#217346"/><path d="m1 3 13-2v22L1 21z" fill="#217346"/><text x="4" y="16" class="t-app">X</text></svg></button>
    <button class="run current" aria-label="Rhino"><svg viewBox="0 0 24 24"><path d="M0 0h24v24H0z" fill="#222" stroke="#666"/><path d="m1 3 5 9 4 5 7 3 5-6-1 9q3-7 2-12l-5 4-2-3 4-4-3-3q-5-6-10-4L3 6z" fill="#e8e8e8"/><path d="m1 12 5 1-3 4z" fill="#c33"/></svg></button>
  </div>
  <div class="tray">
    <button class="people" aria-label="People"><svg viewBox="0 0 16 16"><g fill="none" stroke="#fff" stroke-width="1.200"><circle cx="11" cy="4" r="2.800"/><path d="M7.500 11q0-4 4-4t4 4"/><circle cx="5" cy="8" r="2.500"/><path d="M1 15.500q0-5 4-5t4 5"/></g></svg></button>
    <button aria-label="Hidden icons"><svg viewBox="0 0 16 16"><path d="m2 11 6-6 6 6" fill="none" stroke="#fff" stroke-width="1.300"/></svg></button>
    <button aria-label="Volume"><svg viewBox="0 0 16 16"><path d="M1.500 5.500h3l4-4v13l-4-4h-3zM11 6l4 4M15 6l-4 4" fill="none" stroke="#fff" stroke-width="1.100"/></svg></button>
    <button aria-label="Network"><svg viewBox="0 0 16 16"><path d="M2 14Q2 4 14 3M5 14q0-7 9-8M8 14q0-4 6-5" fill="none" stroke="#ddd" stroke-width="1.300"/><circle cx="12.500" cy="13" r="1.800" fill="#fff"/></svg></button>
    <button class="lang">ENG</button>
    <button class="clock"><span>17:32</span><span>10/05/2019</span></button>
    <button class="notes" aria-label="Notifications"><svg viewBox="0 0 24 24"><path d="M0 2h16v13H8l-3 3v-3H0z" fill="#fff"/><path d="M3 5h10M3 8h10M3 11h7" stroke="#111"/></svg><b>1</b></button>
  </div>
</div>
</body>
</html>
```
FILE: styles.css
```css
* { box-sizing: border-box; }
body {
  margin: 0;
  height: 100vh;
  display: flex;
  flex-direction: column;
  overflow: hidden;
  font-family: "Open Sans", "Noto Sans", sans-serif;
  font-size: 11px;
  color: #111;
  background: #f0f0f0;
}
button, input, select { font: inherit; color: inherit; }
button { border: 0; padding: 0; background: none; }
svg { display: block; flex: none; }
ul { list-style: none; margin: 0; padding: 0; }
.defs { position: absolute; width: 0; height: 0; }

/* title and menus */
.titlebar { display: flex; height: 23px; flex: none; background: #fff; }
h1 { margin: 0; padding-left: 2px; font-size: 11px; line-height: 24px; font-weight: 400; flex: 1; }
.winbtns { display: flex; padding-right: 2px; }
.winbtns button { width: 46px; display: grid; place-items: center; }
.winbtns svg { width: 12px; height: 12px; fill: none; stroke: #111; }
.menubar, .tabs, .label { font-family: "Liberation Sans", sans-serif; font-size: 11px; }
.menubar { display: flex; flex: none; gap: 18px; height: 24px; padding: 0 10px 0 15px; line-height: 24px; background: linear-gradient(90deg, #f0f0f0, #fdfdfd); }
.docname { margin-left: auto; }
.tabs { display: flex; flex: none; align-items: stretch; height: 22px; padding-left: 0; line-height: 24px; color: #6a6a6a; position: relative; z-index: 1; }
.tabs button { padding: 0 8px 0 9px; margin-bottom: -1px; height: 23px; border: solid transparent; border-width: 1px 0 0; line-height: 23px; flex: none; }
.tabs button:first-child { padding-left: 8px; }
.tabs .active { padding: 0 9px; color: #000; background: linear-gradient(#fff, #f0f0f0); border: 1px solid #999; border-bottom: 0; border-radius: 7px 7px 0 0; line-height: 19px; }

/* ribbon */
.ribbon { display: flex; flex: none; align-items: flex-start; gap: 4px; height: 87px; padding: 2px 3px; margin-bottom: 1px; border-top: 1px solid #999; border-radius: 6px 6px 0 0; background: linear-gradient(#c4c4c4, #f0f0f0 75px); }
.group { flex: none; border: 1px solid #8c8c8c; border-radius: 5px; overflow: hidden; background: linear-gradient(#e2e2e2, #cfcfcf); box-shadow: inset 0 1px #fff; }
.cells { display: flex; gap: 10px; padding: 1px 1px 0; height: 58px; }
.short .cells { height: 30px; }
.sub { display: grid; grid-template-rows: 28px 28px; grid-auto-flow: column; grid-auto-columns: 28px; position: relative; }
.sub.one { grid-template-rows: 28px; }
.sub + .sub::before { content: ""; position: absolute; left: -5px; top: 2px; bottom: 2px; width: 1px; background: linear-gradient(transparent, #aaa, transparent); }
.sub button { display: grid; place-items: center; }
.sub svg { width: 24px; height: 24px; overflow: visible; }
.label { height: 13px; line-height: 12px; text-align: center; color: #fff; background: #222; white-space: nowrap; width: 0; min-width: 100%; }
.label.cut { font-size: 10px; line-height: 10px; }
.label.more { position: relative; padding-right: 10px; }
.label.more::after { content: "+"; position: absolute; right: 4px; top: 0; color: #aaa; font-weight: 700; }
.t-mono { font: 700 12px "Liberation Mono", monospace; text-anchor: middle; fill: #111; }
.t-mono.t10 { font-size: 11px; }
.t-mono.t-blue { fill: #1888d8; }
.t-red, .t-black { font-family: "Liberation Sans", sans-serif; font-weight: 700; fill: #ec1c24; }
.t-black { fill: #111; }
.t11 { font-size: 11px; }
.t18 { font-size: 18px; }
.t20 { font-size: 20px; }
.t-out { font: 700 18px "Liberation Serif", serif; fill: #fff; stroke: #111; stroke-width: 2px; paint-order: stroke; }
.t-os { font: 700 10px "Liberation Sans", sans-serif; fill: #a8d4ea; }
.t-app { font: 700 11px "Liberation Sans", sans-serif; fill: #fff; }
.c-amber { color: #f2aa48; }
.c-yellow { color: #ffee20; }
.c-red { color: #ec1c24; }
.c-sky { color: #38a8e4; }
.c-pink { color: #cc6699; }
.c-blue { color: #29a8e4; }
.c-white { color: #f4f4f4; }
.c-crimson { color: #c01414; }
.c-green { color: #5cb82c; }

/* canvas toolbar */
.toolbar { display: flex; flex: none; align-items: center; height: 32px; padding: 0 1px 0 0; border-top: 1px solid #666; border-left: 2px solid #888; background: linear-gradient(90deg, transparent, #fff8), linear-gradient(#fdfdfd, #f3f3f3); }
.ib { width: 28px; height: 28px; display: grid; place-items: center; margin-right: 1px; border: 1px solid transparent; }
.ib svg { width: 23px; height: 23px; }
.ib.on { border-color: #0a78d8; background: #e4f0fb; }
.ib:nth-child(2) { margin-left: 2px; }
.sep { width: 1px; height: 20px; margin: 0 7px 0 6px; background: #c0c0c0; }
.sep.tight { margin: 0 1px 0 3px; }
.zoom { position: relative; margin: 0 2px 0 -4px; }
.zoom select { appearance: none; width: 69px; height: 25px; padding: 0 3px; border: 1px solid #8a8a8a; border-radius: 0; background: #fff; font-size: 12px; }
.zoom svg { position: absolute; right: 4px; top: 8px; width: 10px; height: 10px; }
.caret { width: 9px; height: 20px; margin-right: 2px; display: grid; place-items: center; }
.caret:last-child { margin-right: 0; }
.caret::before { content: ""; border: 3px solid transparent; border-top-color: #111; border-bottom: 0; }
.grow { flex: 1; }

/* node canvas */
.canvas {
  position: relative;
  flex: 1;
  min-height: 0;
  overflow: hidden;
  font-size: 20px;
  border-bottom: 1px solid #ddd;
  background-color: #878ff8;
  background-image: linear-gradient(90deg, #838bf3 2px, transparent 2px), linear-gradient(#838bf3 2px, transparent 2px);
  background-size: 293px 100%, 100% 98px;
  background-position: 71px 0, 0 92px;
}
.canvas::after { content: ""; position: absolute; inset: 0; border-left: 2px solid #888; border-right: 2px solid #e4e4e4; pointer-events: none; }
.wires { position: absolute; inset: 0; width: 100%; height: 100%; }
.node { position: absolute; border: 2px solid #222; border-radius: 7px; white-space: nowrap; background: linear-gradient(#dddde2, #c2c2cb 16px, #a6a6b2 16px, #90909c); box-shadow: inset 0 0 0 1px #ffffff90; }
.recipe { left: -200px; top: 85px; width: 283px; height: 361px; padding-right: 21px; text-align: right; line-height: 356px; }
.shade { position: absolute; left: 0; top: 440px; width: 71px; height: 61px; border-radius: 0 0 6px 0; background: #222; }
.geometry { left: 227px; top: 179px; width: 100px; height: 49px; display: grid; place-items: center; border-color: #333; background: linear-gradient(#fafafa, #e2e2e2 16px, #d6d6d6 16px, #c6c6c6); }
.geometry svg { width: 46px; height: 42px; }
.toggle { left: 163px; top: 370px; width: 287px; height: 45px; display: flex; align-items: center; justify-content: space-between; padding: 0 2px 0 18px; }
.toggle button { width: 92px; height: 37px; border: 2px solid #000; border-radius: 3px; color: #fff; font-style: italic; background: linear-gradient(#555, #303030); box-shadow: inset 0 0 0 1px #777; }
.offside { left: 1335px; top: 197px; width: 287px; height: 44px; padding-left: 18px; line-height: 38px; font-size: 19px; }
.slider { left: -40px; top: 490px; width: 481px; height: 45px; display: flex; }
.name { width: 244px; padding-right: 21px; text-align: right; line-height: 32px; border-right: 2px solid #222; }
.track { flex: 1; position: relative; border-radius: 0 5px 5px 0; background: linear-gradient(#fafafa, #d8d8d8); }
.ticks { position: absolute; left: 19px; top: 7px; width: 196px; height: 12px; }
.track output { position: absolute; left: 147px; top: 3px; line-height: 26px; font-size: 19px; }
.track input { position: absolute; left: 8px; top: 9px; width: 210px; height: 16px; margin: 0; appearance: none; background: none; }
.track input::-webkit-slider-thumb { appearance: none; width: 10px; height: 10px; margin: 0 2px; border: 2px solid #000; background: #fff; transform: rotate(45deg); }

.daylight { left: 618px; top: 240px; width: 435px; height: 400px; display: grid; grid-template-columns: 225px 48px 1fr; column-gap: 8px; color: #fff; border-color: #103c10; background: linear-gradient(#dbe7a8, #bccf66 14px, #9ab81e 14px, #86a20c 300px); box-shadow: inset 0 0 0 2px #d4e29c; }
.inputs { padding-top: 2px; text-align: right; }
.inputs li { height: 39px; line-height: 38px; }
.rule { display: flex; align-items: center; justify-content: flex-end; }
.rule i { width: 152px; height: 1px; background: repeating-linear-gradient(90deg, #eaf2cc 0 6px, transparent 6px 9px); }
.rule.long i { width: 161px; height: 2px; opacity: .7; }
.outputs { padding: 2px 0 0 2px; }
.outputs li { height: 60px; line-height: 60px; }
.logo { width: 46px; height: 46px; margin-top: 252px; }
.expand { position: absolute; left: 4px; top: 7px; width: 27px; height: 27px; display: grid; place-items: center; border: 2px solid #333; border-radius: 5px; background: linear-gradient(#fff, #bbb); }
.expand svg { width: 20px; height: 20px; }
.alert { position: absolute; left: 1030px; top: 223px; width: 20px; height: 20px; }
.tooltip { position: absolute; left: 1041px; top: 229px; width: 232px; height: 30px; display: flex; align-items: center; gap: 14px; padding: 0 0 1px 3px; font-size: 11px; background: #fff; border: 1px solid #767676; box-shadow: 3px 3px 3px #0006; }
.tooltip svg { width: 22px; height: 20px; }
.widget { position: absolute; left: 2px; bottom: 0; width: 63px; height: 28px; display: flex; gap: 4px; padding: 1px 2px; border: 1px solid #222; background: linear-gradient(90deg, #fff, #ddd 80%, #777); }
.widget button { width: 24px; height: 24px; display: grid; place-items: center; }
.widget svg { width: 22px; height: 22px; }
.widget .scribble { border: 1px solid #111; border-radius: 3px; background: #ffd22c; }
.watermark { position: absolute; right: 56px; bottom: 9px; width: 237px; display: flex; flex-direction: column; color: #989ac8; white-space: nowrap; }
.watermark strong { font-size: 19px; line-height: 24px; font-weight: 400; }
.watermark span { font-size: 14px; line-height: 20px; }

/* status bar */
.status { display: flex; flex: none; align-items: center; gap: 3px; height: 23px; padding: 0 18px 0 3px; font-size: 11px; background: linear-gradient(90deg, #f0f0f0, #fcfcfc); }
.status svg { width: 16px; height: 16px; }
.version { margin-left: auto; color: #666; }

/* taskbar */
.taskbar { display: flex; flex: none; height: 40px; color: #fff; background: #070b12; }
.taskbar button { display: grid; place-items: center; flex: none; }
.start { width: 48px; }
.start svg { width: 16px; height: 16px; }
.search { width: 344px; display: flex; align-items: center; gap: 9px; padding: 0 14px 0 9px; background: #f1f1f1; color: #333; }
.search svg { width: 22px; height: 22px; }
.search .mic { width: 12px; height: 18px; }
.search input { flex: 1; min-width: 0; border: 0; padding: 0; background: none; font-size: 14px; }
.search input::placeholder { color: #444; opacity: 1; }
.view { width: 48px; }
.view svg { width: 18px; height: 16px; }
.apps { display: flex; gap: 1px; padding-left: 3px; }
.apps button { width: 48px; position: relative; }
.apps svg { width: 23px; height: 23px; }
.run::after { content: ""; position: absolute; left: 4px; right: 4px; bottom: 0; height: 2px; background: #76b9ed; }
.apps .current { background: #3b4048; }
.current::after { left: 0; right: 0; }
.tray { margin-left: auto; display: flex; align-items: center; padding-right: 4px; font-size: 12px; }
.tray button { width: 24px; height: 40px; }
.tray svg { width: 16px; height: 16px; }
.tray .people { margin-right: 12px; }
.tray .lang { width: 34px; }
.tray .clock { width: 74px; align-content: center; line-height: 18px; font-size: 11px; }
.tray .notes { width: 47px; position: relative; border-right: 1px solid #555; }
.tray .notes svg { width: 24px; height: 24px; }
.notes b { position: absolute; left: 19px; top: 18px; width: 17px; height: 17px; border: 1px solid #888; border-radius: 50%; background: #333; font-size: 11px; line-height: 15px; text-align: center; }
```
